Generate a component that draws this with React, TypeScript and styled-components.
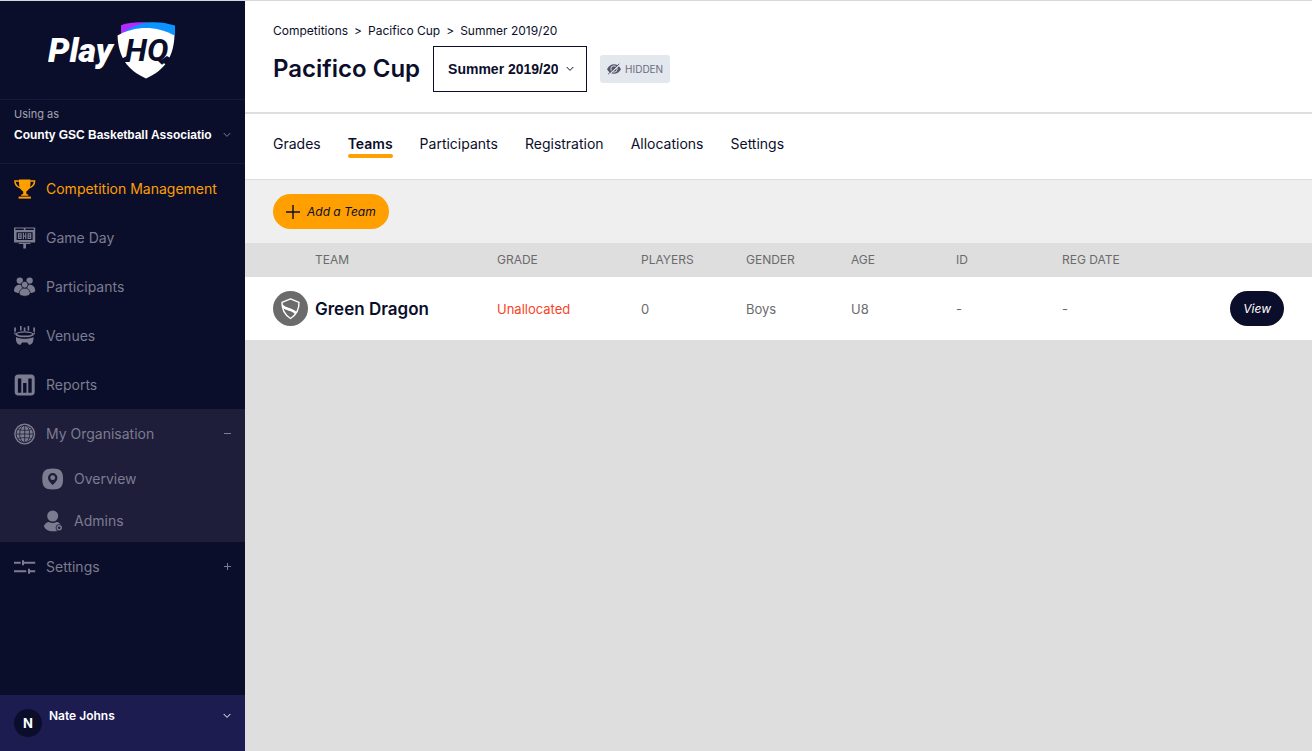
import React from "react";
import styled, { createGlobalStyle, css } from "styled-components";

const color = {
  navy: "#0b0e2b",
  navyLight: "#1e1d3a",
  indigo: "#1c1c50",
  muted: "#7c7c90",
  orange: "#ff9f00",
  grey: "#6b6b6b",
  line: "#dedede",
};

const GlobalStyle = createGlobalStyle`
  *, *::before, *::after { box-sizing: border-box; }
  body {
    margin: 0;
    background: #dedede;
    color: ${color.navy};
    font-family: Inter, "Liberation Sans", sans-serif;
    font-size: 14px;
    line-height: 20px;
  }
  a { color: inherit; text-decoration: none; }
  button, select { font: inherit; color: inherit; cursor: pointer; }
`;

const Page = styled.div`
  display: flex;
  min-height: 100vh;
  border-top: 1px solid #d6d7d9;
`;

/* Sidebar */

const Sidebar = styled.aside`
  display: flex;
  flex-direction: column;
  flex: 0 0 245px;
  background: ${color.navy};
  color: ${color.muted};
`;

const Brand = styled.a`
  display: flex;
  justify-content: center;
  padding: 19px 21px 19px 0;
  border-bottom: 1px solid #191a37;
`;

const OrgPicker = styled.div`
  display: flex;
  flex-direction: column;
  height: 64px;
  padding: 6px 14px 0;
  border-bottom: 1px solid #191a37;
`;

const OrgLabel = styled.label`
  font-size: 11px;
  line-height: 16px;
  color: #a3a3b3;
`;

const SelectWrap = styled.div`
  display: grid;
  align-items: center;
  & > * { grid-area: 1 / 1; }
  & > svg { justify-self: end; pointer-events: none; }
`;

const OrgSelect = styled.select`
  width: 100%;
  height: 26px;
  padding: 0 12px 0 0;
  border: 0;
  appearance: none;
  background: transparent;
  color: #fff;
  font: bold 12px/26px "Liberation Sans", Arial, sans-serif;
`;

const Nav = styled.nav`
  display: flex;
  flex-direction: column;
`;

const navRow = css`
  display: flex;
  align-items: center;
  gap: 10px;
  width: 100%;
  height: 49px;
  padding: 0 14px;
`;

const NavLink = styled.a<{ $active?: boolean }>`
  ${navRow}
  color: ${(p) => (p.$active ? color.orange : "inherit")};
`;

const NavToggle = styled.button`
  ${navRow}
  border: 0;
  background: transparent;
  text-align: left;
`;

const NavText = styled.span`
  flex: 1;
`;

const NavGroup = styled.div`
  background: ${color.navyLight};
`;

const SubLink = styled.a`
  display: flex;
  align-items: center;
  gap: 10px;
  height: 42px;
  padding: 0 14px 0 42px;
`;

const UserButton = styled.button`
  display: flex;
  gap: 7px;
  height: 56px;
  margin-top: auto;
  padding: 11px 14px 0;
  border: 0;
  background: ${color.indigo};
  color: #fff;
  text-align: left;
  font-size: 12px;
  font-weight: 600;
`;

const Avatar = styled.span`
  display: flex;
  align-items: center;
  justify-content: center;
  width: 28px;
  height: 28px;
  margin-top: 3px;
  border-radius: 50%;
  background: ${color.navy};
  font-size: 13px;
  font-weight: 700;
`;

const UserName = styled.span`
  flex: 1;
`;

const UserChevron = styled.span`
  display: flex;
  align-items: center;
  height: 20px;
`;

/* Main column */

const Main = styled.main`
  flex: 1;
  min-width: 0;
`;

const Header = styled.header`
  padding: 20px 28px;
  border-bottom: 2px solid ${color.line};
  background: #fff;
`;

const Crumbs = styled.nav`
  display: flex;
  gap: 6px;
  margin-bottom: 5px;
  font-size: 12px;
`;

const TitleRow = styled.div`
  display: flex;
  align-items: center;
  gap: 13px;
`;

const Title = styled.h1`
  margin: 0;
  font-size: 24px;
  line-height: 32px;
  font-weight: 600;
`;

const SeasonWrap = styled(SelectWrap)`
  & > svg { margin-right: 13px; }
`;

const SeasonSelect = styled.select`
  width: 154px;
  height: 46px;
  padding: 0 28px 0 14px;
  border: 1px solid ${color.navy};
  border-radius: 0;
  appearance: none;
  background: #fff;
  font: bold 14px/20px "Liberation Sans", Arial, sans-serif;
`;

const Tag = styled.span`
  display: inline-flex;
  align-items: center;
  gap: 4px;
  height: 28px;
  padding: 0 7px;
  border-radius: 3px;
  background: #e3e7ee;
  color: #6c6c7c;
  font-size: 10px;
`;

const Tabs = styled.nav`
  display: flex;
  gap: 27px;
  padding: 20px 28px 21px;
  border-bottom: 1px solid ${color.line};
  background: #fff;
`;

const Tab = styled.a<{ $active?: boolean }>`
  font-weight: ${(p) => (p.$active ? 600 : 400)};
  &::after {
    content: "";
    display: block;
    height: 4px;
    border-radius: 2px;
    background: ${(p) => (p.$active ? color.orange : "transparent")};
  }
`;

const Toolbar = styled.div`
  display: flex;
  padding: 14px 28px;
  background: #efefef;
`;

const Pill = styled.button<{ $dark?: boolean }>`
  display: inline-flex;
  align-items: center;
  gap: 7px;
  height: 35px;
  padding: 0 13px;
  border: 0;
  border-radius: 18px;
  background: ${(p) => (p.$dark ? color.navy : color.orange)};
  color: ${(p) => (p.$dark ? "#fff" : color.navy)};
  font-size: 12px;
  font-style: italic;
`;

const Table = styled.table`
  width: 100%;
  table-layout: fixed;
  border-collapse: collapse;
  color: ${color.grey};
`;

const HeadCell = styled.th<{ $width?: number; $indent?: boolean }>`
  width: ${(p) => (p.$width ? `${p.$width}px` : "auto")};
  height: 34px;
  padding: 0 0 0 ${(p) => (p.$indent ? 70 : 0)}px;
  background: #dedede;
  font-size: 12px;
  font-weight: 400;
  text-align: left;
`;

const Cell = styled.td<{ $alert?: boolean }>`
  height: 63px;
  padding: 0;
  background: #fff;
  color: ${(p) => (p.$alert ? "#f9431f" : "inherit")};
  font-size: 13px;
`;

const ActionCell = styled(Cell)`
  padding-right: 28px;
  text-align: right;
`;

const Team = styled.div`
  display: flex;
  align-items: center;
  gap: 7px;
  padding-left: 28px;
  color: ${color.navy};
  font-size: 17px;
  font-weight: 600;
`;

/* Icons */

const Chevron = () => (
  <svg width="8" height="6" viewBox="0 0 8 6" fill="none" stroke="currentColor" aria-hidden="true">
    <path d="M0.7 1 4 4.4 7.3 1" />
  </svg>
);

const Sign = ({ plus }: { plus?: boolean }) => (
  <svg width="7" height="7" viewBox="0 0 7 7" stroke="currentColor" aria-hidden="true">
    <path d={plus ? "M0 3.5h7M3.5 0v7" : "M0 3.5h7"} />
  </svg>
);

const Icon = ({ children }: { children: React.ReactNode }) => (
  <svg width="22" height="22" viewBox="0 0 22 22" fill="currentColor" aria-hidden="true">
    {children}
  </svg>
);

const TrophyIcon = () => (
  <Icon>
    <path d="M5 1.5h11.500v4c0 4-1.800 6.600-4.200 8v2.300l2.200 1.300v.7H7v-.7l2.200-1.300v-2.300C6.800 12.100 5 9.500 5 5.500z" />
    <path
      d="M5.200 2.900H.9c.1 3.400 2 6 6 7M16.300 2.900h4.300c-.1 3.400-2 6-6 7"
      fill="none"
      stroke="currentColor"
      strokeWidth="1.500"
    />
    <path d="M4.600 18.600h12.300v2H4.600z" />
  </Icon>
);

const ScoreboardIcon = () => (
  <Icon>
    <path
      fillRule="evenodd"
      d="M0 .5h21.200v15H0zM1.400 1.600v1.500h8.400V1.600zM11.400 1.600v1.500h8.400V1.600zM2.600 5.200v7.800h16V5.200z"
    />
    <path
      d="M4.500 6.800h2.600v4.600H4.500zM4.500 9.100h2.600M14.100 6.800h2.600v4.600h-2.600zM14.100 9.100h2.600M9.400 6v6.200M11.800 6v6.200M9.400 9.100h2.400"
      fill="none"
      stroke="currentColor"
      strokeWidth="1.200"
    />
    <path d="M4.800 15.900h11.600v1H12V21.500H9.300V16.900H4.800z" />
  </Icon>
);

const PeopleIcon = ({ bg }: { bg: string }) => (
  <Icon>
    <circle cx="5.800" cy="4.600" r="3.200" />
    <circle cx="15.600" cy="4.600" r="3.200" />
    <path d="M0 15c0-4 2.300-6.300 5.300-6.300 3.300 0 5.300 2.300 5.300 6.300-2 2.800-8.500 2.800-10.600 0zM10.700 15c0-4 2.300-6.300 5.300-6.300s5.300 2.300 5.300 6.300c-2 2.800-8.500 2.800-10.600 0z" />
    <g stroke={bg} strokeWidth=".8">
      <path d="M5.200 18c0-3.800 2.400-6 5.500-6s5.500 2.200 5.500 6c-2 3-9 3-11 0z" />
      <circle cx="10.700" cy="8.700" r="3.400" />
    </g>
  </Icon>
);

const StadiumIcon = ({ bg }: { bg: string }) => (
  <Icon>
    <path d="M.2 2.400h1.700v4.400H.2zM6 1h1.600v4.600H6zM13.600 1h1.600v4.600h-1.600zM19.300 2.400H21v4.400h-1.700zM9.800 2.400h1.600v3.600H9.800zM.2 7.600h1.300v1.600H.2zM19.700 7.600H21v1.600h-1.300z" />
    <ellipse cx="10.600" cy="9.300" rx="9.400" ry="3" />
    <ellipse cx="10.600" cy="9.100" rx="7.600" ry="1.500" fill={bg} />
    <path d="M2 11.800c4 2.400 13.400 2.400 17.400 0 .4 4-.6 7.600-4.200 8.200l-2-2.600H8.200l-2 2.600c-3.600-.6-4.600-4.200-4.200-8.200z" />
    <path d="M1.500 11.400c4.600 2.500 13.800 2.500 18.400 0" fill="none" stroke={bg} strokeWidth=".8" />
  </Icon>
);

const ReportIcon = () => (
  <Icon>
    <path
      fillRule="evenodd"
      d="M4.200.6h13c2.200 0 3.500 1.300 3.500 3.500v13.800c0 2.200-1.300 3.500-3.500 3.500h-13C2 21.400.7 20.100.7 17.900V4.100C.7 1.900 2 .6 4.200.6zM3.900 4.400v14.400h3.400V4.400zM9.100 8.900v9.900h3.400V8.900zM14.300 4.400v14.400h3.400V4.400z"
    />
  </Icon>
);

const GlobeIcon = () => (
  <Icon>
    <circle cx="10.700" cy="11" r="9.800" fill="none" stroke="currentColor" strokeWidth="1.400" />
    <circle cx="10.700" cy="11" r="8.200" />
    <g fill="none" stroke={color.navyLight} strokeWidth=".8">
      <path d="M10.700 2.500v17M2.400 11H19M4 6.600c4 1 9.400 1 13.400 0M4 15.400c4-1 9.400-1 13.400 0" />
      <ellipse cx="10.700" cy="11" rx="5" ry="8.600" />
    </g>
  </Icon>
);

const PinIcon = () => (
  <Icon>
    <path
      fillRule="evenodd"
      d="M10.700.5c7.800 0 10.400 2.600 10.400 10.500s-2.600 10.500-10.400 10.500S.3 18.900.3 11 2.900.5 10.700.5zM10.700 5a4.700 4.700 0 0 0-4.700 4.700c0 3 2.700 5.300 4.700 7.300 2-2 4.700-4.300 4.700-7.300A4.700 4.700 0 0 0 10.700 5z"
    />
    <circle cx="10.700" cy="9.700" r="2.400" />
  </Icon>
);

const AdminIcon = () => (
  <Icon>
    <circle cx="10.700" cy="6" r="5.500" />
    <path d="M1.800 16.200c1-2.600 3-4 5-4.200 2.200 1.400 5.600 1.400 7.800 0 2 .2 3.700 1.500 4.600 3.500l-4 5.800H9c-3.200-.3-5.800-2.100-7.200-5.100z" />
    <circle cx="17.200" cy="17.700" r="3.500" fill={color.navyLight} />
    <circle cx="17.200" cy="17.700" r="2" fill="none" stroke="currentColor" strokeWidth="1.400" />
  </Icon>
);

const SlidersIcon = () => (
  <Icon>
    <path d="M0 5.800h6.700v2H0zM8 4.300h2v5H8zM10 5.800h11.200v2H10zM0 14.200h12.300v2H0zM14 12.700h2v5h-2zM16 14.200h5.200v2H16z" />
  </Icon>
);

const HiddenIcon = () => (
  <svg width="14" height="12" viewBox="0 0 14 12" aria-hidden="true">
    <path d="M0 6.200C1.800 3 4.200 1.300 7 1.300s5.200 1.700 7 4.900c-1.800 3-4.200 4.600-7 4.600S1.800 9.200 0 6.200z" fill="#55556a" />
    <circle cx="7" cy="6" r="3.200" fill="none" stroke="#e3e7ee" strokeWidth=".9" />
    <path d="M2 11.600 13.200 1.300" stroke="#e3e7ee" strokeWidth="1.200" />
    <path d="M1.100 11.200 12.300.8" stroke="#55556a" />
  </svg>
);

const PlusIcon = () => (
  <svg width="14" height="14" viewBox="0 0 14 14" stroke="currentColor" strokeWidth="1.400" aria-hidden="true">
    <path d="M0 7h14M7 0v14" />
  </svg>
);

const TeamBadge = () => (
  <svg width="35" height="35" viewBox="0 0 35 35" aria-hidden="true">
    <circle cx="17.500" cy="17.500" r="17.500" fill={color.grey} />
    <path
      d="M17.500 7.800 26 11.300c.2 6.800-2 12.200-8.500 16.200C11 23.500 8.800 18 9 11.300z"
      fill="none"
      stroke="#fff"
      strokeWidth="1.400"
      strokeLinejoin="round"
    />
    <path d="M9 13c3.600 4 11 4 14.800 8.200l-1.600 2.200C19 19.200 12.500 20 9.600 16.500z" fill="#fff" />
  </svg>
);

const Logo = () => (
  <svg width="128" height="60" viewBox="0 0 128 60" role="img" aria-label="PlayHQ">
    <path d="M73 5.200C81 2.400 90 1.800 100 2.600L84 12l-11 2z" fill="#b12dff" />
    <path d="M73 14C80 9 88 4.500 99 2.500c10-1 19 .2 28 3V16C112 6.500 89 6 73 14z" fill="#0a94ff" />
    <path d="M69.500 15.500C87 5.500 109 5.500 126.500 15.500 125.500 37 117 50 98 58.500 79 50 70.500 37 69.500 15.500z" fill="#fff" />
    <path d="M73 39l6-3 3 6h-7zM113 40l6-4 5 3-5 7z" fill={color.navy} />
    <g fontFamily="Roboto, sans-serif" fontStyle="italic">
      <text x="0" y="42" fontSize="34" fontWeight="900" fill="#fff">
        Play
      </text>
      <text x="77" y="41" fontSize="32" fontWeight="700" fill={color.navy}>
        HQ
      </text>
    </g>
  </svg>
);

/* Page */

const tabs = ["Grades", "Teams", "Participants", "Registration", "Allocations", "Settings"];

const columns = [
  { label: "TEAM", width: 252, indent: true },
  { label: "GRADE", width: 144 },
  { label: "PLAYERS", width: 105 },
  { label: "GENDER", width: 105 },
  { label: "AGE", width: 105 },
  { label: "ID", width: 106 },
  { label: "REG DATE", width: 106 },
];

const teams = [
  { name: "Green Dragon", grade: "Unallocated", players: 0, gender: "Boys", age: "U8", id: "-", regDate: "-" },
];

export default function App() {
  return (
    <>
      <GlobalStyle />
      <Page>
        <Sidebar>
          <Brand href="#">
            <Logo />
          </Brand>
          <OrgPicker>
            <OrgLabel htmlFor="organisation">Using as</OrgLabel>
            <SelectWrap>
              <OrgSelect id="organisation">
                <option>County GSC Basketball Associatio</option>
              </OrgSelect>
              <Chevron />
            </SelectWrap>
          </OrgPicker>
          <Nav aria-label="Main">
            <NavLink href="#" $active aria-current="page">
              <TrophyIcon />
              <NavText>Competition Management</NavText>
            </NavLink>
            <NavLink href="#">
              <ScoreboardIcon />
              <NavText>Game Day</NavText>
            </NavLink>
            <NavLink href="#">
              <PeopleIcon bg={color.navy} />
              <NavText>Participants</NavText>
            </NavLink>
            <NavLink href="#">
              <StadiumIcon bg={color.navy} />
              <NavText>Venues</NavText>
            </NavLink>
            <NavLink href="#">
              <ReportIcon />
              <NavText>Reports</NavText>
            </NavLink>
            <NavGroup>
              <NavToggle type="button" aria-expanded="true">
                <GlobeIcon />
                <NavText>My Organisation</NavText>
                <Sign />
              </NavToggle>
              <SubLink href="#">
                <PinIcon />
                <NavText>Overview</NavText>
              </SubLink>
              <SubLink href="#">
                <AdminIcon />
                <NavText>Admins</NavText>
              </SubLink>
            </NavGroup>
            <NavToggle type="button" aria-expanded="false">
              <SlidersIcon />
              <NavText>Settings</NavText>
              <Sign plus />
            </NavToggle>
          </Nav>
          <UserButton type="button">
            <Avatar>N</Avatar>
            <UserName>Nate Johns</UserName>
            <UserChevron>
              <Chevron />
            </UserChevron>
          </UserButton>
        </Sidebar>

        <Main>
          <Header>
            <Crumbs aria-label="Breadcrumb">
              <a href="#">Competitions</a>
              <span>&gt;</span>
              <a href="#">Pacifico Cup</a>
              <span>&gt;</span>
              <a href="#">Summer 2019/20</a>
            </Crumbs>
            <TitleRow>
              <Title>Pacifico Cup</Title>
              <SeasonWrap>
                <SeasonSelect aria-label="Season">
                  <option>Summer 2019/20</option>
                </SeasonSelect>
                <Chevron />
              </SeasonWrap>
              <Tag>
                <HiddenIcon />
                HIDDEN
              </Tag>
            </TitleRow>
          </Header>
          <Tabs aria-label="Season sections">
            {tabs.map((name) => (
              <Tab key={name} href="#" $active={name === "Teams"}>
                {name}
              </Tab>
            ))}
          </Tabs>
          <Toolbar>
            <Pill type="button">
              <PlusIcon />
              Add a Team
            </Pill>
          </Toolbar>
          <Table>
            <thead>
              <tr>
                {columns.map((c) => (
                  <HeadCell key={c.label} scope="col" $width={c.width} $indent={c.indent}>
                    {c.label}
                  </HeadCell>
                ))}
                <HeadCell aria-label="Actions" />
              </tr>
            </thead>
            <tbody>
              {teams.map((t) => (
                <tr key={t.name}>
                  <Cell>
                    <Team>
                      <TeamBadge />
                      {t.name}
                    </Team>
                  </Cell>
                  <Cell $alert>{t.grade}</Cell>
                  <Cell>{t.players}</Cell>
                  <Cell>{t.gender}</Cell>
                  <Cell>{t.age}</Cell>
                  <Cell>{t.id}</Cell>
                  <Cell>{t.regDate}</Cell>
                  <ActionCell>
                    <Pill type="button" $dark>
                      View
                    </Pill>
                  </ActionCell>
                </tr>
              ))}
            </tbody>
          </Table>
        </Main>
      </Page>
    </>
  );
}
